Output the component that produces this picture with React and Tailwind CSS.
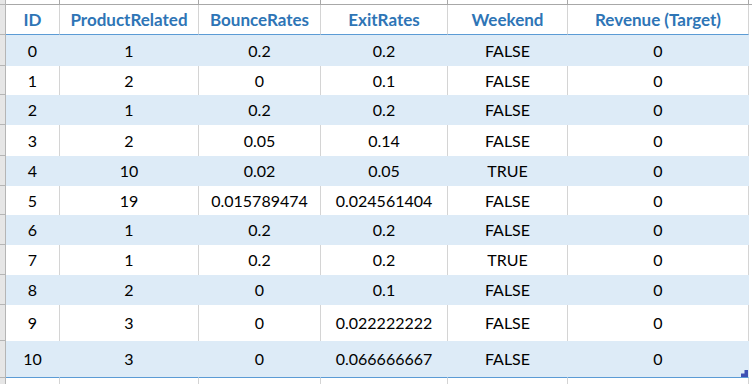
import React from "react";

const cols = [
  { key: "id", label: "ID", w: "w-[54px]" },
  { key: "pr", label: "ProductRelated", w: "w-[139px]" },
  { key: "br", label: "BounceRates", w: "w-[122px]" },
  { key: "er", label: "ExitRates", w: "w-[127px]" },
  { key: "wk", label: "Weekend", w: "w-[120px]" },
  { key: "rv", label: "Revenue (Target)", w: "w-[181px]" },
];

const rows = [
  { h: "h-[31px]", v: ["0", "1", "0.2", "0.2", "FALSE", "0"] },
  { h: "h-[29px]", v: ["1", "2", "0", "0.1", "FALSE", "0"] },
  { h: "h-[30px]", v: ["2", "1", "0.2", "0.2", "FALSE", "0"] },
  { h: "h-[31px]", v: ["3", "2", "0.05", "0.14", "FALSE", "0"] },
  { h: "h-[30px]", v: ["4", "10", "0.02", "0.05", "TRUE", "0"] },
  { h: "h-[29px]", v: ["5", "19", "0.015789474", "0.024561404", "FALSE", "0"] },
  { h: "h-[30px]", v: ["6", "1", "0.2", "0.2", "FALSE", "0"] },
  { h: "h-[30px]", v: ["7", "1", "0.2", "0.2", "TRUE", "0"] },
  { h: "h-[30px]", v: ["8", "2", "0", "0.1", "FALSE", "0"] },
  { h: "h-[36px]", v: ["9", "3", "0", "0.022222222", "FALSE", "0"] },
  { h: "h-[37px]", v: ["10", "3", "0", "0.066666667", "FALSE", "0"] },
];

const Gutter = ({ h }) => (
  <div className={`${h} w-[6px] shrink-0 bg-[#e6e6e6] border-r border-b border-[#b5b5b5]`} />
);

const App = () => {
  return (
    <div
      className="w-[752px] h-[384px] overflow-hidden bg-white text-black"
      style={{ fontFamily: "Lato, 'Liberation Sans', sans-serif" }}
    >
      {/* column header strip (cut off) */}
      <div className="flex h-[5px]">
        <Gutter h="h-[5px]" />
        {cols.map((c) => (
          <div key={c.key} className={`${c.w} shrink-0 border-r border-b border-[#a8a8a8]`} />
        ))}
        <div className="flex-1 border-b border-[#a8a8a8]" />
      </div>

      {/* table header */}
      <div className="flex h-[30px]">
        <Gutter h="h-[30px]" />
        {cols.map((c) => (
          <div
            key={c.key}
            className={`${c.w} shrink-0 flex items-end justify-center pb-[3px] border-r border-[#d4d4d4] border-b border-b-[#5b9bd5] text-[17px] leading-[22px] font-bold text-[#2e75b6]`}
          >
            {c.label}
          </div>
        ))}
        <div className="flex-1" />
      </div>

      {/* data rows */}
      {rows.map((r, i) => {
        const band = i % 2 === 0;
        const last = i === rows.length - 1;
        return (
          <div key={i} className={`flex ${r.h}`}>
            <Gutter h={r.h} />
            {r.v.map((val, j) => (
              <div
                key={j}
                className={`${cols[j].w} shrink-0 relative flex items-center justify-center text-[16px] border-r ${
                  band ? "bg-[#ddebf7] border-[#ddebf7]" : "border-[#d4d4d4]"
                } ${last ? "border-b border-b-[#5b9bd5]" : ""}`}
              >
                {val}
                {last && j === 5 && (
                  <span className="absolute right-0 bottom-0 w-[7px] h-[7px] bg-[#3f51b5] [clip-path:polygon(100%_0,100%_100%,0_100%,0_50%,50%_50%,50%_0)]" />
                )}
              </div>
            ))}
            <div className="flex-1" />
          </div>
        );
      })}

      {/* empty row below */}
      <div className="flex h-[20px]">
        <Gutter h="h-[20px]" />
        {cols.map((c) => (
          <div key={c.key} className={`${c.w} shrink-0 border-r border-[#d4d4d4]`} />
        ))}
        <div className="flex-1" />
      </div>
    </div>
  );
};

export default App;
